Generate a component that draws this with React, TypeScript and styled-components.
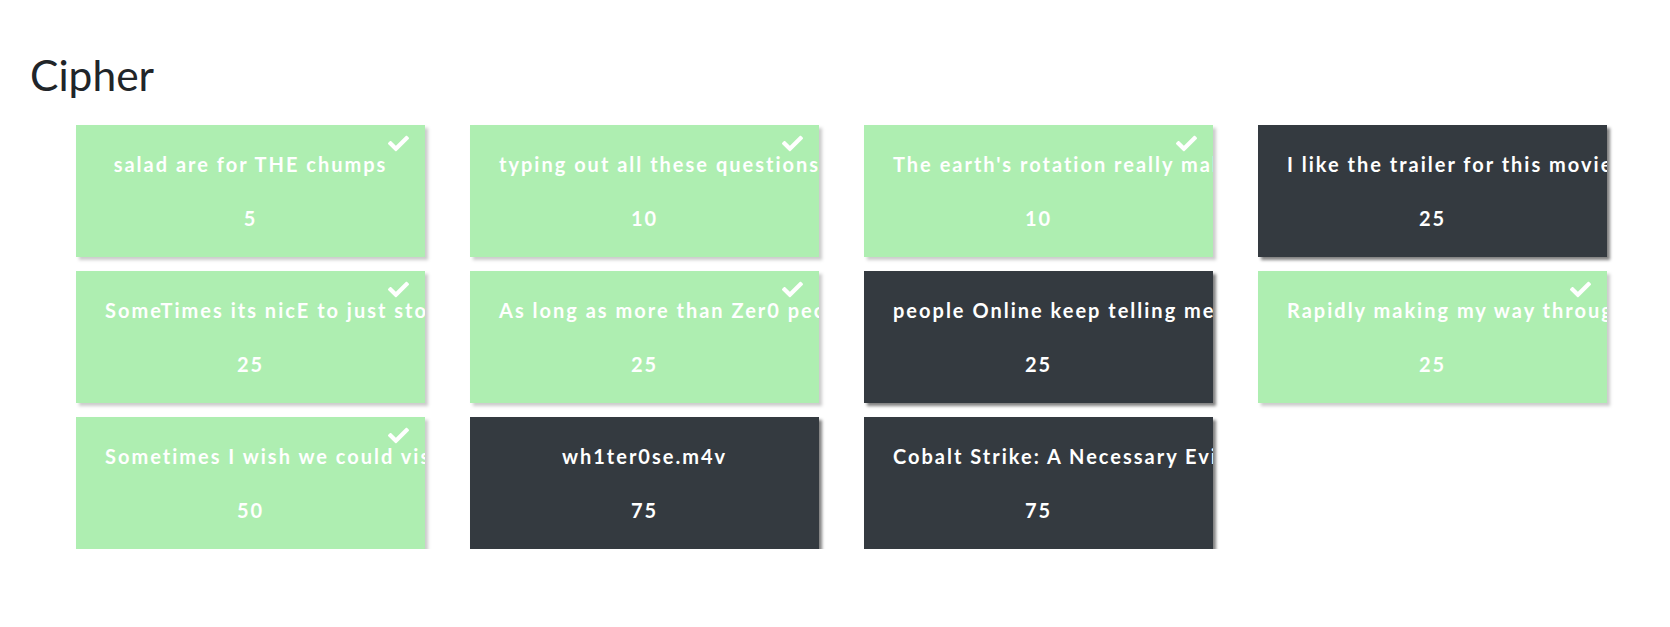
import React from "react";
import styled, { createGlobalStyle } from "styled-components";
import { FaCheck } from "react-icons/fa";

const Global = createGlobalStyle`
  html, body { margin: 0; padding: 0; background: #fff; }
  body { font-family: Lato, "Open Sans", sans-serif; color: #212529; }
`;

const Page = styled.main`
  padding: 49px 0 0 30px;
`;

const Title = styled.h3`
  margin: 0 0 25px 0;
  font-family: Lato, sans-serif;
  font-weight: 400;
  font-size: 42.5px;
  line-height: 51px;
  color: #212529;
`;

const Grid = styled.div`
  display: grid;
  grid-template-columns: repeat(4, 349px);
  column-gap: 45px;
  row-gap: 14px;
  margin-left: 46px;
`;

const Card = styled.button<{ $solved: boolean }>`
  position: relative;
  display: flex;
  flex-direction: column;
  align-items: stretch;
  height: 132px;
  padding: 24px 29px 24px;
  border: 0;
  border-radius: 0;
  overflow: hidden;
  background: ${(p) => (p.$solved ? "#37d63e" : "#343a40")};
  opacity: ${(p) => (p.$solved ? 0.4 : 1)};
  box-shadow: 3px 3px 3px grey;
  color: #fff;
  font-family: Lato, sans-serif;
  font-weight: 700;
  font-size: 20px;
  letter-spacing: 2px;
  cursor: pointer;
  text-align: center;
`;

const Name = styled.p`
  margin: 0 0 24px 0;
  line-height: 30px;
  white-space: nowrap;
`;

const Value = styled.span`
  line-height: 30px;
`;

const Check = styled(FaCheck)`
  position: absolute;
  top: 8px;
  right: 16px;
  width: 21px;
  height: 21px;
  color: #fff;
`;

const challenges = [
  { name: "salad are for THE chumps", value: 5, solved: true },
  { name: "typing out all these questions...", value: 10, solved: true },
  { name: "The earth's rotation really makes my day", value: 10, solved: true },
  { name: "I like the trailer for this movie", value: 25, solved: false },
  { name: "SomeTimes its nicE to just stop and think", value: 25, solved: true },
  { name: "As long as more than Zer0 people", value: 25, solved: true },
  { name: "people Online keep telling me things", value: 25, solved: false },
  { name: "Rapidly making my way through", value: 25, solved: true },
  { name: "Sometimes I wish we could visit", value: 50, solved: true },
  { name: "wh1ter0se.m4v", value: 75, solved: false },
  { name: "Cobalt Strike: A Necessary Evil", value: 75, solved: false },
];

export default function App() {
  return (
    <>
      <Global />
      <Page>
        <Title>Cipher</Title>
        <Grid>
          {challenges.map((c) => (
            <Card key={c.name} $solved={c.solved}>
              {c.solved && <Check />}
              <Name>{c.name}</Name>
              <Value>{c.value}</Value>
            </Card>
          ))}
        </Grid>
      </Page>
    </>
  );
}
